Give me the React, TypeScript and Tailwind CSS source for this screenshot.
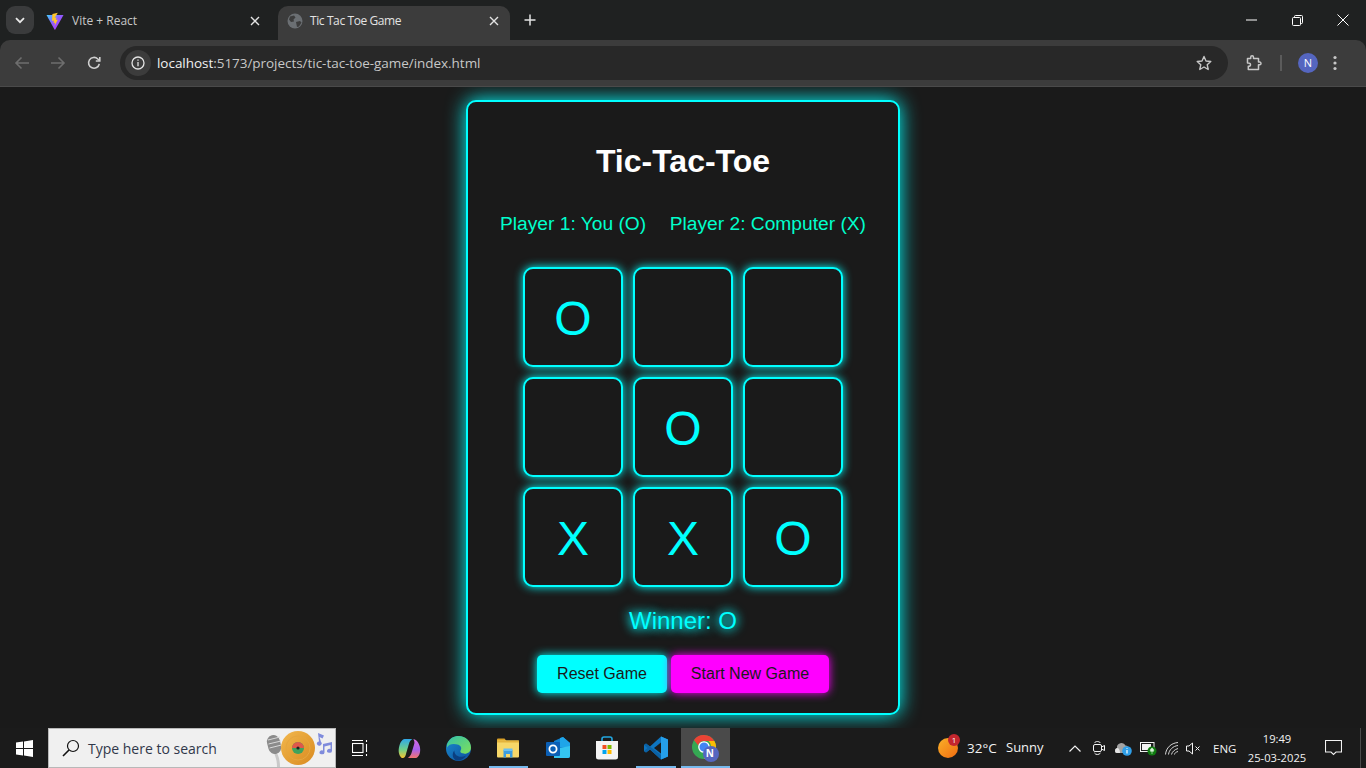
import React from "react";

const board = ["O", "", "", "", "O", "", "X", "X", "O"];

function VOGlobe() {
  return (
    <svg width="16" height="16" viewBox="0 0 16 16">
      <circle cx="8" cy="8" r="7.5" fill="#6b6f73" />
      <path d="M3 3.5 7 2.5 8.500 4.500 6.500 6.500 7 8.500 4 9 2 6.500ZM9 9l4-1 1.500 1.500-2.500 4L10 14Z" fill="#3c3c3c" />
    </svg>
  );
}

function ViteLogo() {
  return (
    <svg width="18" height="18" viewBox="0 0 18 18" className="shrink-0">
      <defs>
        <linearGradient id="vg" x1="0" y1="0" x2="1" y2="1">
          <stop offset="0" stopColor="#41d1ff" />
          <stop offset="0.45" stopColor="#8f5bff" />
          <stop offset="1" stopColor="#bd34fe" />
        </linearGradient>
      </defs>
      <path d="M0.500 3 17.500 3 9.300 17.500a.5.5 0 0 1-.8 0Z" fill="url(#vg)" />
      <path d="M11.800.8 6.400 1.900l-.4 7 2-.4-.5 2.600 1.600-.4-.6 3.400 3.400-6.600-2 .4.600-2.400-1.800.3Z" fill="#ffc629" />
    </svg>
  );
}

function Tab({ active, icon, title, titleCls, padCls }: { active?: boolean; icon: React.ReactNode; title: string; titleCls: string; padCls: string }) {
  return (
    <div className={`flex h-[34px] w-[232px] items-center rounded-t-[10px] pb-[5px] pl-[9px] ${padCls} ${active ? "bg-[#3c3c3c]" : ""}`}>
      <span className="flex w-[16px] items-center justify-center">{icon}</span>
      <span className={`flex-1 text-[12px] ${titleCls} ${active ? "text-[#e3e3e3]" : "text-[#c7c7c7]"}`}>{title}</span>
      <svg width="10" height="10" viewBox="0 0 10 10" stroke="#e3e3e3" strokeWidth="1.4">
        <path d="M1 1l8 8M9 1l-8 8" />
      </svg>
    </div>
  );
}

function TabStrip() {
  return (
    <div className="flex h-[40px] items-end bg-[#1f2121]">
      <div className="mb-[6px] ml-[6px] flex h-[28px] w-[28px] items-center justify-center rounded-[9px] bg-[#3a3b3c]">
        <svg width="10" height="7" viewBox="0 0 10 7" fill="none" stroke="#e8e8e8" strokeWidth="1.8">
          <path d="M1 1.200l4 4 4-4" />
        </svg>
      </div>
      <div className="ml-[4px] w-[240px]">
        <Tab icon={<ViteLogo />} title="Vite + React" titleCls="ml-[9px] tracking-[0px]" padCls="pr-[10px]" />
      </div>
      <Tab active icon={<VOGlobe />} title="Tic Tac Toe Game" titleCls="ml-[7px] tracking-[-0.4px]" padCls="pr-[11px]" />
      <div className="mb-[6px] ml-[8px] flex h-[28px] w-[24px] items-center justify-center">
        <svg width="12" height="12" viewBox="0 0 12 12" stroke="#e3e3e3" strokeWidth="1.5">
          <path d="M6 .5v11M.5 6h11" />
        </svg>
      </div>
      <div className="ml-auto flex h-[40px] items-start text-white">
        <div className="flex h-[40px] w-[46px] items-center justify-center">
          <svg width="11" height="2" viewBox="0 0 11 2"><path d="M0 1h11" stroke="#fff" strokeWidth="1" /></svg>
        </div>
        <div className="flex h-[40px] w-[46px] items-center justify-center">
          <svg width="11" height="11" viewBox="0 0 11 11" fill="none" stroke="#fff" strokeWidth="1">
            <rect x=".5" y="2.500" width="8" height="8" rx="1" />
            <path d="M2.500 2.500V1.500a1 1 0 0 1 1-1h6a1 1 0 0 1 1 1v6a1 1 0 0 1-1 1H8.500" />
          </svg>
        </div>
        <div className="flex h-[40px] w-[46px] items-center justify-center">
          <svg width="12" height="12" viewBox="0 0 12 12" stroke="#fff" strokeWidth="1"><path d="M.5.5l11 11M11.500.5l-11 11" /></svg>
        </div>
      </div>
    </div>
  );
}

function Toolbar() {
  return (
    <div className="relative z-10 flex h-[47px] items-center bg-[#1f2121]">
      <div className="flex h-[47px] w-full items-center rounded-t-[10px] border-b border-[#4a4a4a] bg-[#3c3c3c]">
        <div className="flex w-[120px] items-center pl-[14px]">
          <svg width="16" height="14" viewBox="0 0 16 14" fill="none" stroke="#6e6e6e" strokeWidth="1.6">
            <path d="M15 7H2M7.500 1.500 2 7l5.500 5.500" />
          </svg>
          <svg width="16" height="14" viewBox="0 0 16 14" fill="none" stroke="#6e6e6e" strokeWidth="1.6" className="ml-[20px]">
            <path d="M1 7h13M8.500 1.500 14 7l-5.500 5.500" />
          </svg>
          <svg width="14" height="14" viewBox="0 0 14 14" fill="none" stroke="#d0d0d0" strokeWidth="1.6" className="ml-[21px]">
            <path d="M12.300 7.800A5.400 5.400 0 1 1 10.800 3L12.600 4.800" />
            <path d="M12.800 1v4H8.800" />
          </svg>
        </div>
        <div className="flex h-[34px] w-[1108px] items-center rounded-[17px] bg-[#282828]">
          <div className="ml-[5px] flex h-[26px] w-[26px] items-center justify-center rounded-full bg-[#3c3c3c]">
            <svg width="14" height="14" viewBox="0 0 14 14" fill="none" stroke="#e3e3e3" strokeWidth="1.3">
              <circle cx="7" cy="7" r="6" />
              <path d="M7 6v4.200M7 3.500v1.300" />
            </svg>
          </div>
          <div className="ml-[6px] text-[13.5px] tracking-[-0.04px] text-[#c7c7c7] [font-family:'Open_Sans','Liberation_Sans',sans-serif]">
            <span className="text-[#f1f1f1]">localhost</span>:5173/projects/tic-tac-toe-game/index.html
          </div>
          <svg width="16" height="16" viewBox="0 0 16 16" fill="none" stroke="#c7c7c7" strokeWidth="1.4" className="ml-auto mr-[16px]">
            <path d="M8 1.500 10 6l4.800.5-3.600 3.200 1 4.800L8 12l-4.200 2.500 1-4.800L1.200 6.500 6 6Z" strokeLinejoin="round" />
          </svg>
        </div>
        <svg width="17" height="16" viewBox="0 0 17 16" fill="none" stroke="#c7c7c7" strokeWidth="1.5" className="ml-[18px]">
          <path d="M1.500 3.500h3.200V2.200a1.400 1.400 0 0 1 2.800 0v1.300h5v3.600h1.200a1.300 1.300 0 0 1 0 2.600h-1.200v4.800H2.300v-3.200c1.600.3 2.200-.8 2.200-1.600s-1-2-3-1.700Z" strokeLinejoin="round" />
        </svg>
        <div className="ml-[17px] h-[16px] w-[2px] bg-[#5b5b5b]" />
        <div className="ml-[16px] flex h-[20px] w-[20px] items-center justify-center rounded-full bg-[#5566c0] text-[11px] text-white">N</div>
        <svg width="4" height="16" viewBox="0 0 4 16" fill="#c7c7c7" className="ml-[15px]">
          <circle cx="2" cy="2.500" r="1.600" /><circle cx="2" cy="8" r="1.600" /><circle cx="2" cy="13.500" r="1.600" />
        </svg>
      </div>
    </div>
  );
}

function Game() {
  return (
    <main className="flex flex-1 items-center justify-center bg-[#1a1a1a] [font-family:'Liberation_Sans',Arial,sans-serif]">
      <div className="flex h-[615px] w-[434px] flex-col items-center rounded-[10px] border-2 border-[#00ffff] bg-[#1a1a1a] pt-[41px] shadow-[0_0_20px_#00ffff]">
        <h1 className="text-[32px] leading-[37px] font-bold text-white">Tic-Tac-Toe</h1>
        <div className="mt-[32px] flex w-[370px] justify-between px-[2px] text-[19.2px] leading-[23px] text-[#00ffcc]">
          <span>Player 1: You (O)</span>
          <span>Player 2: Computer (X)</span>
        </div>
        <div className="mt-[32px] grid grid-cols-[100px_100px_100px] gap-[10px]">
          {board.map((v, i) => (
            <div
              key={i}
              className="flex h-[100px] w-[100px] items-center justify-center rounded-[10px] border-2 border-[#00ffff] bg-[#1a1a1a] pt-[4px] text-[48px] text-[#00ffff] shadow-[0_0_10px_#00ffff]"
            >
              {v}
            </div>
          ))}
        </div>
        <div className="mt-[20px] text-[24px] leading-[28px] text-[#00ffff] [text-shadow:0_0_10px_#00ffff,0_0_12px_#00ffff]">Winner: O</div>
        <div className="mt-[20px] flex gap-[4px]">
          <button className="h-[38px] w-[130px] rounded-[5px] bg-[#00ffff] text-[16px] text-[#1a1a1a] shadow-[0_0_10px_#00ffff]">Reset Game</button>
          <button className="h-[38px] w-[158px] rounded-[5px] bg-[#ff00ff] text-[16px] text-[#1a1a1a] shadow-[0_0_10px_#ff00ff]">Start New Game</button>
        </div>
      </div>
    </main>
  );
}

function WinLogo() {
  return (
    <svg width="17" height="17" viewBox="0 0 17 17" fill="#fff">
      <path d="M0 2.500 7 1.500V8H0ZM8 1.400 17 0V8H8ZM0 9h7v6.500L0 14.500ZM8 9h9v8l-9-1.400Z" />
    </svg>
  );
}

function SearchBox() {
  return (
    <div className="flex h-[40px] w-[288px] items-center border border-[#b8b8b8] bg-[#f0f0f0] pl-[13px]">
      <svg width="18" height="18" viewBox="0 0 18 18" fill="none" stroke="#111" strokeWidth="1.2">
        <circle cx="11" cy="7" r="5.500" /><path d="M7 11 1 17" strokeWidth="1.600" />
      </svg>
      <span className="ml-[8px] pt-[1px] text-[14px] text-[#30384a]">Type here to search</span>
      <svg width="68" height="38" viewBox="0 0 68 38" className="ml-auto mr-[2px]">
        <defs>
          <linearGradient id="gd" x1="0" y1="0" x2="1" y2="1">
            <stop offset="0" stopColor="#f2b84e" /><stop offset="1" stopColor="#d98a1f" />
          </linearGradient>
        </defs>
        <path d="M9 24c2 5 3 8 3 14h3c0-6-1-10-3-14Z" fill="#c9c9c9" />
        <rect x="2.500" y="6" width="13" height="19" rx="6.500" transform="rotate(-14 9 15)" fill="#8b8b8b" />
        <path d="M3 11l12-3M3.500 15l12.500-3M4.500 19l12-3" stroke="#d8d8d8" strokeWidth="1" />
        <circle cx="33" cy="19" r="17" fill="url(#gd)" />
        <circle cx="33" cy="19" r="12" fill="none" stroke="#e6a63e" strokeWidth="1" />
        <circle cx="33" cy="19" r="6" fill="#3fa35c" />
        <path d="M27 19a6 6 0 0 1 12 0Z" fill="#e0574a" />
        <circle cx="33" cy="19" r="1.600" fill="#222" />
        <path d="M53 4l6 2.500-1.500 3-3-1.500 1.500 5a2.500 2 0 1 1-2-.5Z" fill="#7f8bdc" />
        <path d="M58 15l9-2v9a2.500 2 0 1 1-1.500-2v-4l-6 1.500v6a2.500 2 0 1 1-1.500-2Z" fill="#7f8bdc" />
      </svg>
    </div>
  );
}

function AppSlot({ children, line, active }: { children: React.ReactNode; line?: boolean; active?: boolean }) {
  return (
    <div className={`relative flex h-[40px] w-[49.3px] items-center justify-center ${active ? "bg-[#4a4a4a]" : ""}`}>
      {children}
      {line && <div className={`absolute bottom-0 h-[2px] bg-[#76b9ed] ${active ? "left-0 right-0" : "left-[5px] right-[5px]"}`} />}
    </div>
  );
}

function TaskView() {
  return (
    <svg width="16" height="16" viewBox="0 0 16 16" fill="none" stroke="#fff" strokeWidth="1.1">
      <path d="M0 .5h11M0 15.500h11" /><rect x="0.500" y="3.500" width="10.500" height="9" />
      <path d="M14.500 0v2M14.500 4v8M14.500 14v2" />
    </svg>
  );
}

function Copilot() {
  return (
    <svg width="23" height="23" viewBox="0 0 24 24">
      <defs>
        <linearGradient id="c1" x1="0" y1="0" x2="0" y2="1"><stop offset="0" stopColor="#2fa8ea" /><stop offset=".55" stopColor="#6fd08a" /><stop offset="1" stopColor="#f7c52f" /></linearGradient>
        <linearGradient id="c2" x1="0" y1="0" x2="0" y2="1"><stop offset="0" stopColor="#d86be0" /><stop offset=".55" stopColor="#a860ec" /><stop offset="1" stopColor="#f4746c" /></linearGradient>
      </defs>
      <path d="M7 2h8c-2 1-3 3-3.500 5L8 19c-.6 2-2 3-4 3C1.500 20 0 16 1 11 1.800 7 3.500 2.500 7 2Z" fill="url(#c1)" />
      <path d="M16 2c3 .3 5 3 6.500 7 1.500 5 .5 11-3.500 13h-9c2-1 3.300-3 4-5l3-10c.4-1.500 0-3.500-1-5Z" fill="url(#c2)" />
      <path d="M8 19l3.500-12 2 5-3 9Z" fill="#1b1b1b" opacity=".35" />
    </svg>
  );
}

function Edge() {
  return (
    <svg width="25" height="25" viewBox="0 0 24 24">
      <defs>
        <linearGradient id="e1" x1="0" y1="0" x2="1" y2="1"><stop offset="0" stopColor="#35c1a8" /><stop offset="1" stopColor="#7ee05a" /></linearGradient>
        <linearGradient id="e2" x1="0" y1="0" x2="1" y2="1"><stop offset="0" stopColor="#1a8ccf" /><stop offset="1" stopColor="#0d4f9c" /></linearGradient>
      </defs>
      <circle cx="12" cy="12" r="12" fill="url(#e2)" />
      <path d="M1 8C3 2 8 0 12 0c7 0 12 5 12 11 0 4-3 6-6 6-2.500 0-5-1-4-3 1-1.500 1-4-2-5.500C8 7 3 7 1 11Z" fill="url(#e1)" />
      <path d="M8 14c0 4 3 6 6 6 2 0 4-.5 5.500-1.500-2 3-4.500 5-7.500 5-2 0-3-.5-4-1.500C6 20.500 6 16 8 14Z" fill="#0b3f80" />
    </svg>
  );
}

function Explorer() {
  return (
    <svg width="22" height="20" viewBox="0 0 22 20">
      <path d="M0 1.500A1 1 0 0 1 1 .5h6.500l2 2.500H0Z" fill="#d9a027" />
      <rect x="0" y="2.500" width="22" height="17" rx="1" fill="#f7d768" />
      <rect x="0" y="2.500" width="22" height="2" fill="#e4b33c" />
      <path d="M6.500 12h9v7.500h-2.500v-3.500h-4v3.500h-2.500Z" fill="#3d9de0" />
      <rect x="6.500" y="10.500" width="9" height="2.500" fill="#6cc0f0" />
    </svg>
  );
}

function Outlook() {
  return (
    <svg width="24" height="24" viewBox="0 0 24 24">
      <path d="M8 5 17 1l7 6v13a2 2 0 0 1-2 2H8Z" fill="#0f7fd0" />
      <path d="M14 2 17 1l7 6v4H14Z" fill="#1fa5e8" />
      <path d="M8 13l16-3v10a2 2 0 0 1-2 2H8Z" fill="#34c5f0" />
      <rect x="0" y="6" width="14" height="14" rx="1" fill="#0b5fb5" />
      <circle cx="7" cy="13" r="3.600" fill="none" stroke="#fff" strokeWidth="1.800" />
    </svg>
  );
}

function Store() {
  return (
    <svg width="24" height="24" viewBox="0 0 24 24">
      <path d="M7 5V3a2 2 0 0 1 2-2h6a2 2 0 0 1 2 2v2" fill="none" stroke="#22a7e0" strokeWidth="1.600" />
      <path d="M1 5h22v16a2.500 2.500 0 0 1-2.500 2.500h-17A2.500 2.500 0 0 1 1 21Z" fill="#f4f4f4" />
      <rect x="7.500" y="9" width="4" height="4" fill="#f25022" /><rect x="12.500" y="9" width="4" height="4" fill="#7fba00" />
      <rect x="7.500" y="14" width="4" height="4" fill="#00a4ef" /><rect x="12.500" y="14" width="4" height="4" fill="#ffb900" />
    </svg>
  );
}

function VSCode() {
  return (
    <svg width="24" height="24" viewBox="0 0 24 24">
      <path d="M17 .5 24 3.500v17L17 23.500 6 13.500 2 16.500 0 15v-6l2-1.500 4 3Z" fill="#0e75c0" />
      <path d="M17 .5 24 3.500v17L17 23.500Z" fill="#25a0ea" />
      <path d="M17 6.500 10 12l7 5.500Z" fill="#1b1b1b" />
      <path d="M0 9l2-1.500L17 19v4.500L6 13.500 2 16.500 0 15l3.500-3Z" fill="#0b62a5" />
    </svg>
  );
}

function ChromeProfile() {
  return (
    <svg width="27" height="27" viewBox="0 0 27 27">
      <circle cx="12" cy="12" r="12" fill="#35a853" />
      <path d="M12 0a12 12 0 0 1 10.400 6H12a6 6 0 0 0-5.800 4.500L2 5A12 12 0 0 1 12 0Z" fill="#ea4335" />
      <path d="M22.400 6A12 12 0 0 1 12 24l5.200-9a6 6 0 0 0-.8-9Z" fill="#fbbc05" />
      <circle cx="12" cy="12" r="5.200" fill="#4285f4" stroke="#fff" strokeWidth="1.300" />
      <circle cx="19" cy="19" r="8" fill="#5566c0" />
    </svg>
  );
}

function Tray() {
  return (
    <div className="ml-auto flex h-[40px] items-center text-[#f2f2f2]">
      <div className="relative h-[20px] w-[20px] rounded-full bg-gradient-to-br from-[#f8b028] to-[#f06a10]">
        <div className="absolute -right-[2px] -top-[4px] flex h-[12px] w-[12px] items-center justify-center rounded-full bg-[#c4262e] text-[8px] text-white">1</div>
      </div>
      <span className="ml-[9px] w-[39px] text-[13.5px]">32°C</span>
      <span className="w-[63px] text-[13px]">Sunny</span>
      <svg width="12" height="7" viewBox="0 0 12 7" fill="none" stroke="#f2f2f2" strokeWidth="1.200">
        <path d="M.5 6.500 6 1l5.500 5.500" />
      </svg>
      <svg width="12" height="16" viewBox="0 0 12 16" fill="none" stroke="#f2f2f2" strokeWidth="1" className="ml-[12px]">
        <path d="M1.500 3C2.500 1 6 1 7.500 3M1.500 13C2.500 15 6 15 7.500 13" /><rect x=".5" y="4.500" width="8" height="7" rx="1.500" /><path d="M8.500 7l3-1.500v5l-3-1.500" />
      </svg>
      <svg width="18" height="15" viewBox="0 0 18 15" className="ml-[9px]">
        <path d="M1 10a3 3 0 0 1 2-3 4.500 4.500 0 0 1 8.500-2.500c2 0 3 1.500 3 3L11 12H3a2 2 0 0 1-2-2Z" fill="#a3a3a3" />
        <path d="M1 10a3 3 0 0 1 2-3c2 0 3 2 3 5H3a2 2 0 0 1-2-2Z" fill="#e4e4e4" />
        <circle cx="13" cy="10" r="4.800" fill="#2f9fe8" />
        <path d="M13 9v3.500M13 7.200v.9" stroke="#fff" strokeWidth="1.200" />
      </svg>
      <svg width="17" height="15" viewBox="0 0 17 15" className="ml-[8px]">
        <rect x=".5" y="1.500" width="13.500" height="9" fill="none" stroke="#f2f2f2" />
        <rect x="2" y="3" width="9" height="6" fill="#f2f2f2" />
        <circle cx="12" cy="10" r="4.500" fill="#107c10" />
        <path d="M12 7c1.500 1 2 2 1.500 3.300H10.500C10 9 10.500 8 12 7ZM12 10v3" fill="#d9f2d9" stroke="#d9f2d9" strokeWidth=".6" />
      </svg>
      <svg width="14" height="13" viewBox="0 0 14 13" fill="none" stroke="#d6d6d6" strokeWidth="1" className="ml-[8px]">
        <path d="M.5 12.500C1 6 6 1 13 .5M3.500 12.500C4 8 8 4 13 3.500M6.500 12.500C7 10 9.500 7.500 13 6.500M9.500 12.500c.2-1.500 1.500-2.500 3.500-3" />
      </svg>
      <svg width="15" height="13" viewBox="0 0 15 13" fill="none" stroke="#f2f2f2" strokeWidth="1" className="ml-[7px]">
        <path d="M.5 4h2.500L6.500 1v11L3 9H.5ZM9.500 4.500l4 4M13.500 4.500l-4 4" />
      </svg>
      <span className="ml-[12px] w-[23px] pt-[1px] text-[11.5px]">ENG</span>
      <div className="ml-[6px] flex w-[70px] flex-col items-center text-[11.2px] leading-[19px]">
        <span>19:49</span>
        <span>25-03-2025</span>
      </div>
      <svg width="17" height="16" viewBox="0 0 17 16" fill="none" stroke="#f2f2f2" strokeWidth="1.100" className="ml-[13px]">
        <path d="M.5.500h16v11.500h-5.500L8.500 14.500 6 12H.5Z" />
      </svg>
      <div className="ml-[18px] h-[40px] w-[1px] bg-[#4a4a4a]" />
      <div className="w-[5px]" />
    </div>
  );
}

function Taskbar() {
  return (
    <footer className="relative z-10 flex h-[40px] items-center bg-[#1b1b1b]">
      <div className="flex h-[40px] w-[48px] items-center justify-center"><WinLogo /></div>
      <SearchBox />
      <div className="flex h-[40px] w-[48px] items-center justify-center"><TaskView /></div>
      <div className="ml-[1px] flex">
        <AppSlot><Copilot /></AppSlot>
        <AppSlot><Edge /></AppSlot>
        <AppSlot line><Explorer /></AppSlot>
        <AppSlot><Outlook /></AppSlot>
        <AppSlot><Store /></AppSlot>
        <AppSlot line><VSCode /></AppSlot>
        <AppSlot line active>
          <div className="relative">
            <ChromeProfile />
            <span className="absolute bottom-[1px] right-[5px] text-[10px] font-bold text-white">N</span>
          </div>
        </AppSlot>
      </div>
      <Tray />
    </footer>
  );
}

export default function App() {
  return (
    <div className="flex h-screen w-full flex-col overflow-hidden bg-[#1a1a1a] [font-family:'Open_Sans','Noto_Sans',sans-serif]">
      <TabStrip />
      <Toolbar />
      <Game />
      <Taskbar />
    </div>
  );
}
